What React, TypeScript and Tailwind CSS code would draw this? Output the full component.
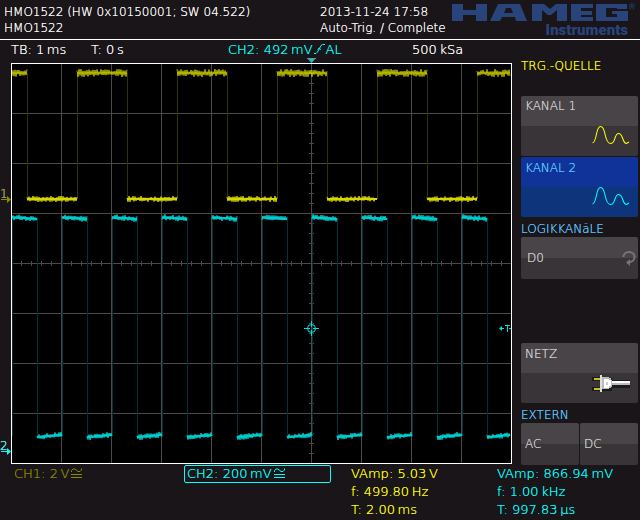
import React from 'react';

type Segment = [number, number];

interface ReadingProps {
  label: string;
  value: string;
  unit: string;
}

interface SoftKeyProps {
  className: string;
  children: React.ReactNode;
}

const GRID_V = [50, 100, 150, 200, 250, 300, 350, 400, 450];
const GRID_H = [50, 100, 150, 200, 250, 300, 350];
const TICKS = Array.from({ length: 49 }, (_, i) => (i + 1) * 10);

const CH1_HIGH: Segment[] = [[1, 16], [66, 116], [166, 216], [266, 316], [366, 416], [466, 499]];
const CH1_LOW: Segment[] = [[16, 66], [116, 166], [216, 266], [316, 366], [416, 466]];
const CH1_EDGES = [16, 66, 116, 166, 216, 266, 316, 366, 416, 466];

const PERIODS = [0, 1, 2, 3, 4, 5, 6, 7, 8, 9];
const CH2_HIGH: Segment[] = PERIODS.map((p) => [p * 50 + 1, p * 50 + 26]);
const CH2_LOW: Segment[] = PERIODS.map((p) => [p * 50 + 26, Math.min(p * 50 + 51, 499)]);

// repeatable ripple, so the traces look the same on every render
const trace = ([from, to]: Segment, y: number, drift = 0, amp = 3) => {
  let d = '';
  for (let x = from; x <= to; x += 1) {
    const r = Math.abs(Math.sin(x * 12.9898 + y) * 43758.5453) % 1;
    const ripple = (x % 2 ? 1 : -1) * (0.3 + r * 0.7) * amp;
    const slope = ((x - from) / (to - from) - 0.5) * drift;
    d += `${d ? 'L' : 'M'}${x} ${(y + ripple + slope).toFixed(1)}`;
  }
  return d;
};

const Logo = () => (
  <div className="absolute top-1 right-3 text-[#29447a]">
    <svg className="block h-[17px] w-[176px]" viewBox="0 0 176 17" fill="currentColor" role="img" aria-label="HAMEG">
      <path d="M0 0h11v6h13V0h11v17H24v-6H11v6H0z" />
      <path fillRule="evenodd" d="M46 0h22l7 17H64l-1-4H50l-2 4H38zM54 4l-2 5h9l-2-5z" />
      <path d="M80 0h12l6 5 6-5h11v17h-10V6l-6 5h-3l-6-5v11H80z" />
      <path d="M119 0h22v4h-12v3h11v4h-11v2h12v4h-22z" />
      <path d="M144 0h31v5h-10V4h-11v9h11v-3h-5V7h16v10h-32z" />
    </svg>
    <div className="absolute top-[18px] right-0 font-[Roboto] text-[15px] leading-[17px] font-black [text-shadow:none]">Instruments</div>
    <span className="absolute top-0 -right-2 text-[8px] leading-2">®</span>
  </div>
);

const WaveIcon = () => (
  <svg className="absolute right-2 bottom-[11px] h-5 w-[38px]" viewBox="0 0 38 20" fill="none" stroke="currentColor" strokeWidth="1.1">
    <path d="M.5 18C2.500 18 3.500 14 4.500 9S6.500 1.500 8.500 1.500S12 4 13 9S15.500 18.500 18.500 18.500S22 16 23 13S24.500 8.500 26.500 8.500S29.500 10 30.500 13S32.500 18.500 34.500 18.500L37 17" />
  </svg>
);

const PlugIcon = () => (
  <svg className="absolute right-2 bottom-[11px] h-[17px] w-[38px]" viewBox="0 0 38 17">
    <path d="M0 2h8v4H0zM0 12h8v4H0zM10 3h10v2h18v8H20v3H10z" fill="#1c1c1c" />
    <path d="M2 3h6v2H2zM2 13h6v2H2z" fill="#c8c800" />
    <path d="M8 0h2v17H8z" fill="#ddd" />
    <path d="M10 2h7v1h2v2h1v7h-1v1h-2v1h-7z" fill="#bbb" />
    <path d="M12 4h5v1h2v6h-2v2h-5z" fill="#fff" />
    <path d="M14 7h2v3h-2z" fill="#ccc" />
    <path d="M20 6h18v4H20z" fill="#fff" />
    <path d="M20 8h18v2H20z" fill="#bbb" />
  </svg>
);

const RotateIcon = () => (
  <svg className="absolute top-[13px] right-[2px] h-4 w-[14px]" viewBox="0 0 14 16" fill="none" stroke="#77757a" strokeWidth="2">
    <path d="M1.500 7A5.500 5 0 1 1 7.500 12" />
    <path d="M8 9V16L4 12.500z" fill="#77757a" stroke="none" />
  </svg>
);

const SlopeIcon = () => (
  <svg className="mx-px inline-block h-[10px] w-[11px] align-baseline" viewBox="0 0 11 10" fill="none" stroke="currentColor">
    <path d="M0 9.500H2L3.500 8L7 1.500L8.500 .5H11" />
    <path d="M3.500 5.500L5.500 4L6.500 6" />
  </svg>
);

const CouplingIcon = () => (
  <svg className="ml-[2px] inline-block h-[10px] w-[11px] align-baseline" viewBox="0 0 11 10" fill="none" stroke="currentColor">
    <path d="M.5 4V2.500L2 1H4L7 3.500H9L10.500 2V.5" />
    <path d="M0 6.500H11M0 9.500H11" />
  </svg>
);

const Reading: React.FC<ReadingProps> = ({ label, value, unit }) => (
  <div>
    {label}: {value}&#8201;{unit}
  </div>
);

const SoftKey: React.FC<SoftKeyProps> = ({ className, children }) => (
  <button
    type="button"
    className={`relative flex rounded-xs bg-linear-to-b from-50% to-50% text-left [text-shadow:inherit] ${className}`}
  >
    {children}
  </button>
);

const Scope = () => (
  <svg className="block w-full" viewBox="0 0 513 407" fill="none">
    <g transform="translate(11 5)">
      <rect width="501" height="401" fill="#000" />
      <g stroke="#4a4a4a" shapeRendering="crispEdges">
        {GRID_V.map((x) => (
          <path key={x} d={`M${x + 0.5} 0V400`} />
        ))}
        {GRID_H.map((y) => (
          <path key={y} d={`M0 ${y + 0.5}H500`} />
        ))}
        {TICKS.map((t) => (
          <path key={t} d={`M${t + 0.5} 198V203`} />
        ))}
        {TICKS.filter((t) => t < 400).map((t) => (
          <path key={t} d={`M298 ${t + 0.5}H303`} />
        ))}
      </g>

      <g stroke="#333300" shapeRendering="crispEdges">
        {CH1_EDGES.map((x) => (
          <path key={x} d={`M${x + 0.5} 10V136`} />
        ))}
      </g>
      <g stroke="#003333" shapeRendering="crispEdges">
        {PERIODS.map((p) => (
          <path key={p} d={`M${p * 50 + 1.5} 155V373M${p * 50 + 26.5} 155V373`} />
        ))}
      </g>

      <g stroke="#d8d800">
        {CH1_HIGH.map((s) => (
          <path key={s[0]} d={trace(s, 10, 0, 4)} strokeOpacity=".8" />
        ))}
        {CH1_HIGH.map((s) => (
          <path key={s[0]} d={`M${s[0]} 10H${s[1]}`} strokeOpacity=".6" />
        ))}
        {CH1_LOW.map((s) => (
          <path key={s[0]} d={trace(s, 136)} />
        ))}
        {CH1_LOW.map((s) => (
          <path key={s[0]} d={`M${s[0]} 136H${s[1]}`} strokeWidth="2" />
        ))}
      </g>
      <g stroke="#00cfcf">
        {CH2_HIGH.map((s) => (
          <path key={s[0]} d={trace(s, 155, 2)} />
        ))}
        {CH2_HIGH.map((s) => (
          <path key={s[0]} d={`M${s[0]} 154.500L${s[1]} 156`} strokeWidth="2" />
        ))}
        {CH2_LOW.map((s) => (
          <path key={s[0]} d={trace(s, 373, -3)} />
        ))}
        {CH2_LOW.map((s) => (
          <path key={s[0]} d={`M${s[0]} 374L${s[1]} 372`} strokeWidth="2" />
        ))}
      </g>

      <rect x=".5" y=".5" width="500" height="400" stroke="#fff" />

      {/* trigger point and level */}
      <g stroke="#00e0e0">
        <circle cx="300.5" cy="265.5" r="4" />
        <path d="M293 265.500H299M302 265.500H308M300.500 258V264M300.500 267V273" />
        <path d="M489 265.500H493M494 262.500H499M496.500 262V269M498 265.500H500" />
        <path d="M488 265.500L491 263V268z" fill="#00e0e0" stroke="none" />
      </g>
      <path d="M296 -5H305L300.500 0z" fill="#00cfcf" />
      <path d="M296 -4.500H305" stroke="#888" />
    </g>

    {/* channel zero markers */}
    <g fill="#8a8a00">
      <text x="0" y="140" fontSize="12">1</text>
      <path d="M1 141H7V138L11 141.500L7 145V142H1z" />
    </g>
    <g fill="#00ffff">
      <text x="0" y="392" fontSize="12">2</text>
      <path d="M1 393H7V390L11 393.500L7 397V394H1z" />
    </g>
  </svg>
);

const App: React.FC = () => {
  const grey = 'from-[#484448] to-[#383438] text-[#d0d0d0]';

  return (
    <div className="min-h-screen bg-[#1a1518] font-['DejaVu_Sans',sans-serif] text-xs font-extralight text-white [text-shadow:0_0_0_currentColor]">
      <header className="relative grid grid-cols-2 border-b border-white pt-1 pb-[3px] leading-4">
        <div className="pl-1">
          <div>HMO1522 (HW 0x10150001; SW 04.522)</div>
          <div>HMO1522</div>
        </div>
        <div>
          <div>2013-11-24 17:58</div>
          <div>Auto-Trig. / Complete</div>
        </div>
        <Logo />
      </header>

      <main className="flex">
        <section className="min-w-0 flex-1">
          <div className="grid grid-cols-[80fr_137fr_184fr_101fr] pt-px pl-[11px] text-[13px] leading-[17px] whitespace-nowrap">
            <div>TB: 1&#8201;ms</div>
            <div>T: 0&#8201;s</div>
            <div className="text-[#00ffff]">
              CH2: 492&#8201;mV<SlopeIcon />AL
            </div>
            <div>500&#8201;kSa</div>
          </div>
          <Scope />
        </section>

        <aside className="flex w-[127px] flex-col pr-[2px] pl-2 leading-4 text-[#5fc8ff]">
          <h2 className="pt-[18px] pb-[22px] text-[#ffff00]">TRG.-QUELLE</h2>
          <SoftKey className={`h-[60px] px-1 pt-[2px] ${grey}`}>
            KANAL 1
            <span className="text-[#ffff00]"><WaveIcon /></span>
          </SoftKey>
          <SoftKey className="mt-px h-[60px] from-[#0f3399] to-[#0e347c] px-1 pt-[3px] text-[#5fc8ff]">
            KANAL 2
            <span className="text-[#00ffff]"><WaveIcon /></span>
          </SoftKey>
          <h2 className="pt-1">LOGIKKANäLE</h2>
          <SoftKey className={`h-[42px] items-center px-[6px] ${grey}`}>
            D0
            <RotateIcon />
          </SoftKey>
          <SoftKey className={`mt-auto h-[60px] px-1 pt-[3px] ${grey}`}>
            NETZ
            <PlugIcon />
          </SoftKey>
          <h2 className="pt-1">EXTERN</h2>
          <div className="grid grid-cols-2 gap-px">
            <SoftKey className={`h-[42px] items-center px-1 ${grey}`}>AC</SoftKey>
            <SoftKey className={`h-[42px] items-center px-1 ${grey}`}>DC</SoftKey>
          </div>
        </aside>
      </main>

      <footer className="grid grid-cols-[170fr_167fr_146fr_143fr] items-start pl-[14px] text-[13px] leading-[18px] whitespace-nowrap">
        <div className="text-[#8a8a00]">CH1: 2&#8201;V<CouplingIcon /></div>
        <div className="mr-5 rounded-xs border border-[#00ffff] pl-[2px] leading-4 text-[#00ffff]">
          CH2: 200&#8201;mV<CouplingIcon />
        </div>
        <div className="text-[#ffff00]">
          <Reading label="VAmp" value="5.03" unit="V" />
          <Reading label="f" value="499.80" unit="Hz" />
          <Reading label="T" value="2.00" unit="ms" />
        </div>
        <div className="text-[#00ffff]">
          <Reading label="VAmp" value="866.94" unit="mV" />
          <Reading label="f" value="1.00" unit="kHz" />
          <Reading label="T" value="997.83" unit="µs" />
        </div>
      </footer>
    </div>
  );
};

export default App;
